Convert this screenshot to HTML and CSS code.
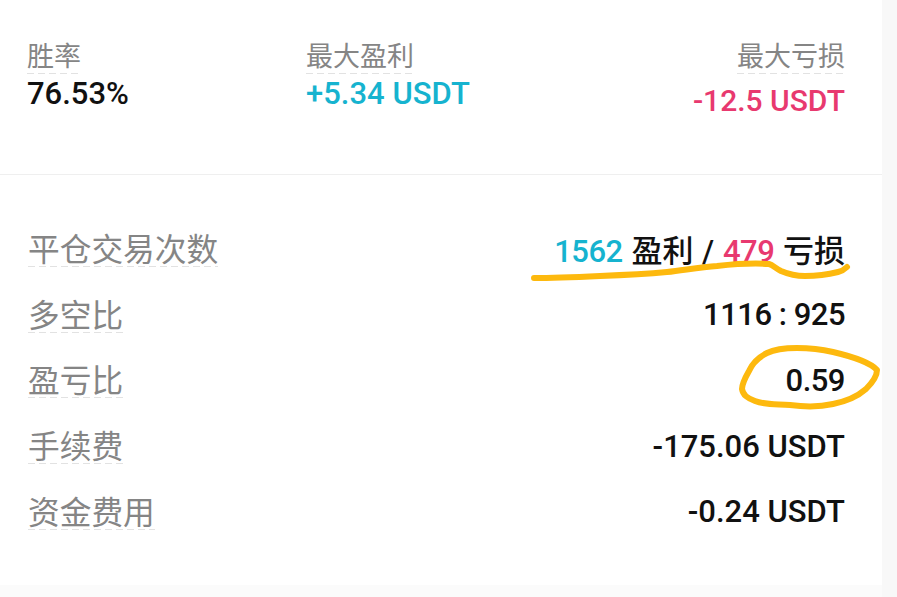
FILE: index.html
```html
<!DOCTYPE html>
<html lang="zh-CN">
<head>
<meta charset="utf-8">
<title>统计</title>
<link rel="stylesheet" href="styles.css">
</head>
<body>
<div class="page">
  <main class="panel">
    <section class="stats">
      <div class="stat">
        <span class="label">胜率</span>
        <span class="value">76.53%</span>
      </div>
      <div class="stat">
        <span class="label">最大盈利</span>
        <span class="value up">+5.34 USDT</span>
      </div>
      <div class="stat stat-end">
        <span class="label">最大亏损</span>
        <span class="value down">-12.5 USDT</span>
      </div>
    </section>
    <section class="rows">
      <div class="row"><span class="row-label">平仓交易次数</span><span class="row-value mixed"><span class="up tight">1562</span> <span class="cjk">盈利</span> / <span class="down tight">479</span> <span class="cjk">亏损</span></span></div>
      <div class="row"><span class="row-label">多空比</span><span class="row-value tight">1116 : 925</span></div>
      <div class="row"><span class="row-label">盈亏比</span><span class="row-value tight">0.59</span></div>
      <div class="row"><span class="row-label">手续费</span><span class="row-value">-175.06 USDT</span></div>
      <div class="row"><span class="row-label">资金费用</span><span class="row-value">-0.24 USDT</span></div>
    </section>
    <div class="band"></div>
  </main>
  <aside class="gutter"></aside>
  <svg class="marks" viewBox="0 0 897 597" width="897" height="597" aria-hidden="true">
    <path d="M534 278C556 278 578 277 600 276C625 275 645 274 667 272C685 270 700 267 717 266C735 264 755 263 769 264C773 265 775 268 781 271C788 274 795 276 805 276C815 276 830 274 838 272C842 271 845 269 847 267"/>
    <path d="M877 370C870 362 850 356 833 352C820 349 810 348 797 348C785 348 775 349 767 353C757 358 752 364 749 371C745 378 742 384 742 389C743 395 747 398 755 401C765 405 775 404 790 405C805 407 820 407 833 404C848 401 858 396 866 389C872 383 877 377 877 370Z"/>
  </svg>
</div>
</body>
</html>
```
FILE: styles.css
```css
* { box-sizing: border-box; }
html, body { margin: 0; height: 100%; background: #fff; overflow: hidden; }
.page {
  position: relative;
  display: flex;
  width: 897px;
  height: 597px;
  font-family: Roboto, "Noto Sans CJK SC", sans-serif;
}
.panel { width: 882px; display: flex; flex-direction: column; }
.gutter { flex: 1; background: #f8f8f8; }

.stats {
  display: grid;
  grid-template-columns: 279px 1fr auto;
  height: 175px;
  padding: 38px 37px 0 27px;
  border-bottom: 1px solid #efefef;
}
.stat { display: flex; flex-direction: column; align-items: flex-start; }
.stat-end { align-items: flex-end; }
.stat-end .value { margin-top: 8px; font-size: 30px; }

.label {
  font-family: "Noto Sans CJK SC", sans-serif;
  font-size: 27px;
  line-height: 33px;
  color: #858585;
  padding-bottom: 3px;
  background: repeating-linear-gradient(90deg, #e2e2e2 0 7px, transparent 7px 11px) left bottom / 100% 1px no-repeat;
}
.value {
  font-size: 31px;
  line-height: 38px;
  font-weight: 500;
  color: #111;
  margin-top: 1px;
}
.up { color: #16b3cf; }
.down { color: #e8396f; }
.tight { letter-spacing: -0.5px; }

.rows {
  flex: 1;
  display: flex;
  flex-direction: column;
  padding: 41px 37px 0 28px;
}
.row {
  display: flex;
  justify-content: space-between;
  align-items: center;
  height: 65.75px;
}
.row-label {
  font-family: "Noto Sans CJK SC", sans-serif;
  font-size: 31.7px;
  line-height: 38px;
  color: #858585;
  padding-bottom: 1px;
  margin-bottom: 3px;
  background: repeating-linear-gradient(90deg, #e2e2e2 0 7px, transparent 7px 11px) left bottom / 100% 1px no-repeat;
}
.row-value {
  font-size: 31px;
  font-weight: 500;
  color: #111;
}
.mixed { word-spacing: 1px; }
.cjk { font-family: "Noto Sans CJK SC", sans-serif; font-weight: 500; }
.band { height: 12px; background: #fbfbfb; }

.marks { position: absolute; left: 0; top: 0; pointer-events: none; }
.marks path {
  fill: none;
  stroke: #fdb90e;
  stroke-width: 6;
  stroke-linecap: round;
  stroke-linejoin: round;
}
```
